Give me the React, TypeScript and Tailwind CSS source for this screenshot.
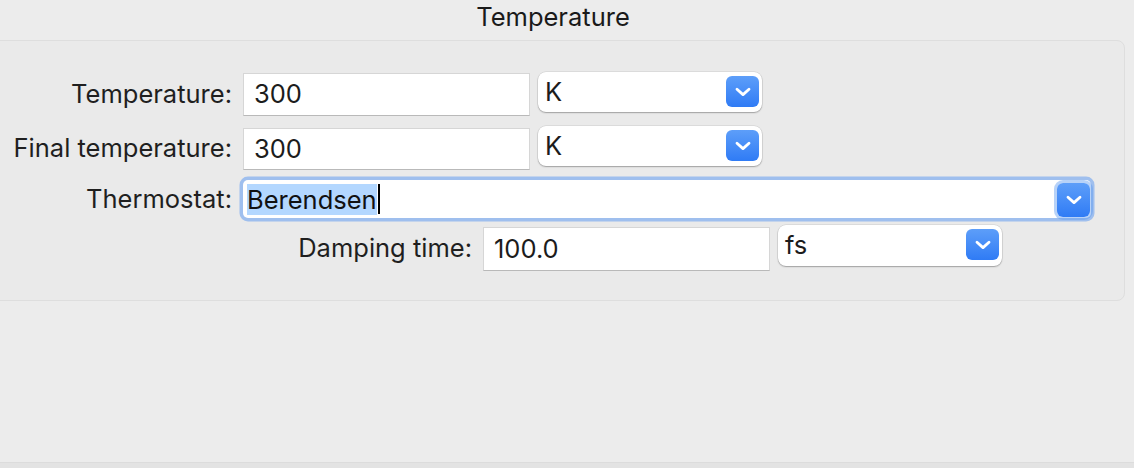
import React from "react";

const font = { fontFamily: "Inter, 'Noto Sans', sans-serif" };

function Chevron() {
  return (
    <svg width="16" height="10" viewBox="0 0 16 10" fill="none">
      <path d="M2 2.2 L8 7.6 L14 2.2" stroke="white" strokeWidth="2.8" strokeLinecap="round" strokeLinejoin="round" />
    </svg>
  );
}

function BlueButton({ className = "" }: { className?: string }) {
  return (
    <div
      className={`flex items-center justify-center rounded-[6px] bg-linear-to-b from-[#5d9ef9] to-[#2f7bf5] ${className}`}
    >
      <Chevron />
    </div>
  );
}

function TextField({ value, className = "" }: { value: string; className?: string }) {
  return (
    <div
      className={`flex items-center bg-white pl-[10px] border border-[#d6d6d6] border-b-[#b9b9b9] text-[#1c1c1c] ${className}`}
    >
      {value}
    </div>
  );
}

function PopUp({ value, className = "" }: { value: string; className?: string }) {
  return (
    <div
      className={`flex items-start justify-between bg-white rounded-[8px] pl-[7px] pr-[3px] shadow-[0_1px_1.5px_rgba(0,0,0,0.28),0_0_0_0.5px_rgba(0,0,0,0.12)] ${className}`}
    >
      <span className="mt-[3px] leading-[34px] text-[#1c1c1c]">{value}</span>
      <BlueButton className="mt-[4px] w-[33px] h-[31px]" />
    </div>
  );
}

function Label({ text, width }: { text: string; width: string }) {
  return <div className={`${width} shrink-0 self-center text-right text-[#1f1f1f]`}>{text}</div>;
}

export default function App() {
  return (
    <div
      className="w-[1134px] h-[468px] bg-[#ececec] flex flex-col overflow-hidden text-[25.5px]"
      style={font}
    >
      <div className="h-[40px] leading-[34px] text-center pr-[28px] text-[#1a1a1a] shrink-0">Temperature</div>

      <div className="ml-[-10px] mr-[9px] h-[261px] shrink-0 rounded-[8px] border border-[#dedede] bg-[#eaeaea] pt-[31px] flex flex-col">
        {/* Temperature */}
        <div className="flex items-start h-[44px]">
          <Label text="Temperature:" width="w-[241px]" />
          <TextField value="300" className="ml-[11px] mt-[1px] w-[287px] h-[43px]" />
          <PopUp value="K" className="ml-[8px] w-[224px] h-[40px]" />
        </div>

        {/* Final temperature */}
        <div className="flex items-start h-[44px] mt-[10px]">
          <Label text="Final temperature:" width="w-[241px]" />
          <TextField value="300" className="ml-[11px] mt-[2px] w-[287px] h-[42px]" />
          <PopUp value="K" className="ml-[8px] w-[224px] h-[40px]" />
        </div>

        {/* Thermostat */}
        <div className="flex items-start h-[38px] mt-[10px]">
          <Label text="Thermostat:" width="w-[241px]" />
          <div className="ml-[11px] w-[848px] h-[38px] flex items-start justify-between bg-white rounded-[5px] shadow-[0_0_0_3.5px_rgba(96,155,240,0.55)]">
            <div className="flex items-center h-[38px] pl-[4px] text-[#111]">
              <span className="bg-[#b3d7ff] leading-[31px]">Berendsen</span>
              <span className="inline-block w-[2px] h-[30px] bg-black ml-[1px]" />
            </div>
            <BlueButton className="mt-[3px] mr-[1px] w-[33px] h-[34px] shadow-[0_0_0_3px_rgba(96,155,240,0.45)]" />
          </div>
        </div>

        {/* Damping time */}
        <div className="flex items-start h-[46px] mt-[7px]">
          <Label text="Damping time:" width="w-[481px]" />
          <TextField value="100.0" className="ml-[11px] mt-[2px] w-[287px] h-[44px]" />
          <PopUp value="fs" className="ml-[8px] w-[224px] h-[41px]" />
        </div>
      </div>

      <div className="flex-1" />
      <div className="h-[6px] shrink-0 bg-[#e3e3e3] border-t border-[#dcdcdc]" />
    </div>
  );
}
